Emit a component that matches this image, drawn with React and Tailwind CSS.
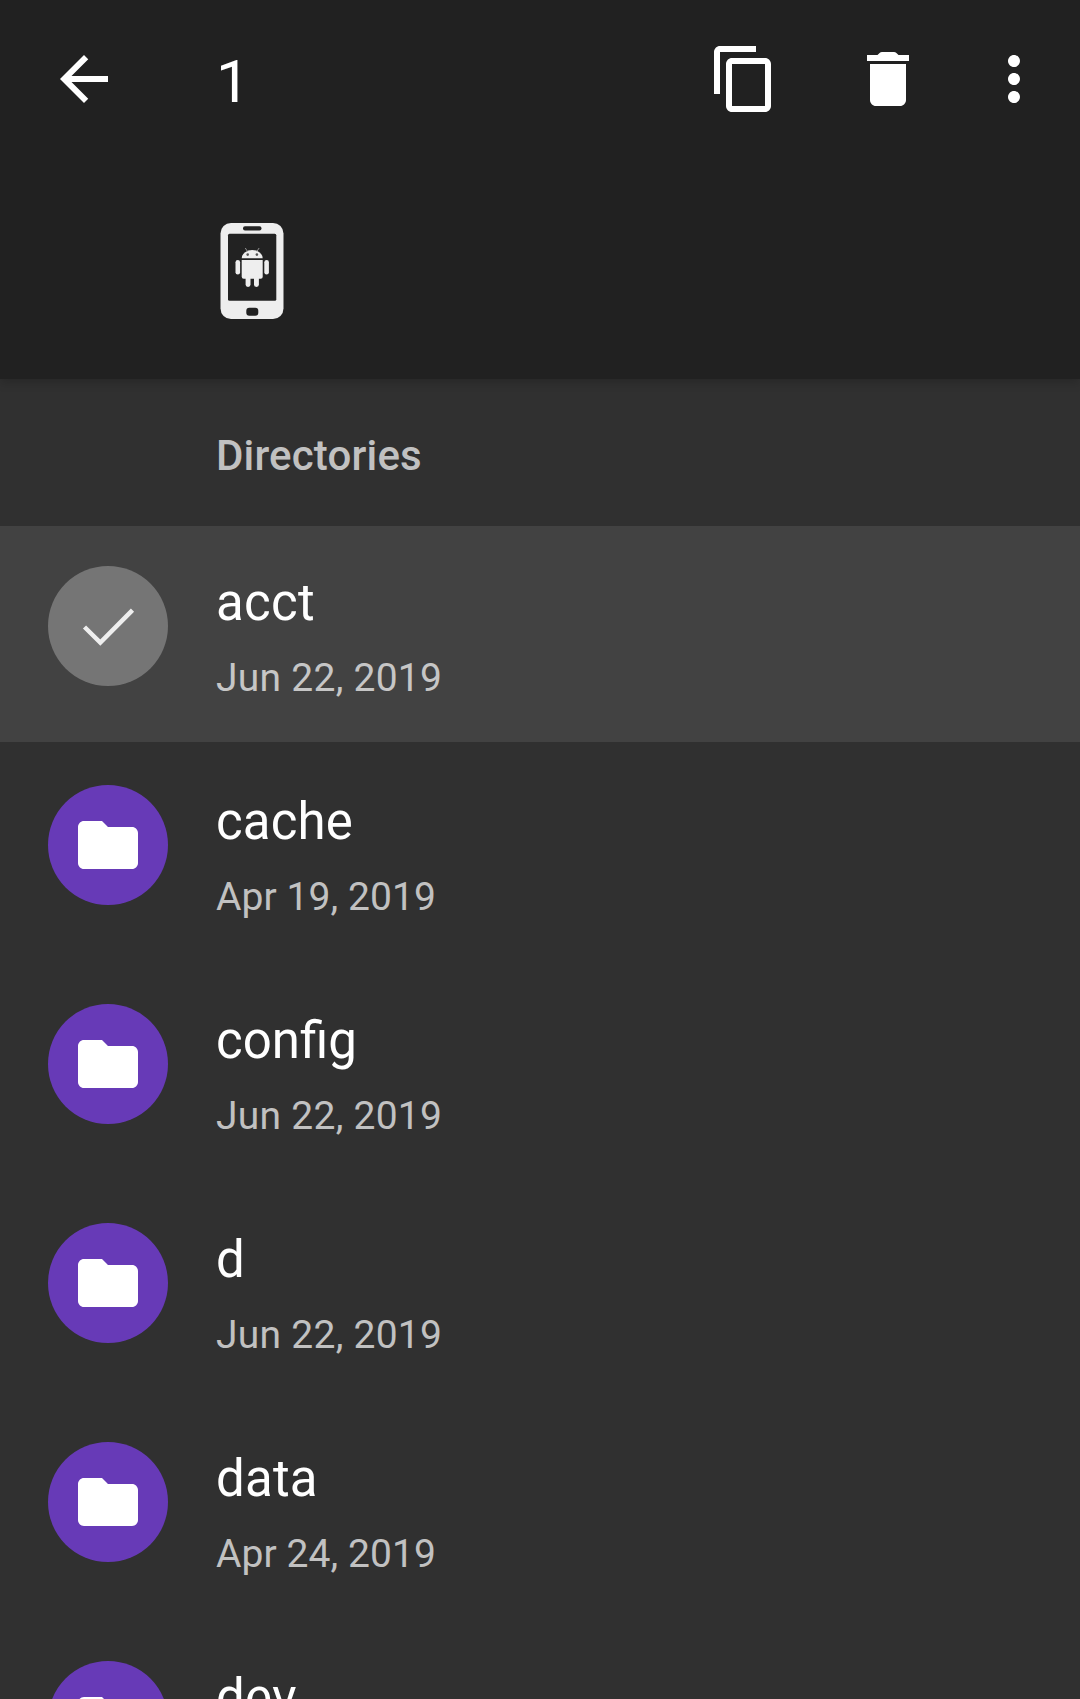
const directories = [
  { name: 'acct', date: 'Jun 22, 2019', nameTracking: 'tracking-[0.3px]', dateTracking: 'tracking-[0.26px]', selected: true },
  { name: 'cache', date: 'Apr 19, 2019', nameTracking: 'tracking-[0.15px]', dateTracking: 'tracking-[0.08px]' },
  { name: 'config', date: 'Jun 22, 2019', nameTracking: '', dateTracking: 'tracking-[0.26px]' },
  { name: 'd', date: 'Jun 22, 2019', nameTracking: '', dateTracking: 'tracking-[0.26px]' },
  { name: 'data', date: 'Apr 24, 2019', nameTracking: 'tracking-[0.2px]', dateTracking: 'tracking-[0.08px]' },
  { name: 'dev', nameTracking: 'tracking-[0.2px]' },
];

function Icon({ d }) {
  return (
    <svg viewBox="0 0 24 24" className="size-[72px]" fill="currentColor">
      <path d={d} />
    </svg>
  );
}

const BACK = 'M20 11H7.83l5.59-5.59L12 4l-8 8 8 8 1.41-1.41L7.83 13H20v-2z';
const COPY =
  'M16 1H4c-1.1 0-2 .9-2 2v14h2V3h12V1zm3 4H8c-1.1 0-2 .9-2 2v14c0 1.1.9 2 2 2h11c1.1 0 2-.9 2-2V7c0-1.1-.9-2-2-2zm0 16H8V7h11v14z';
const TRASH =
  'M6 19c0 1.1.9 2 2 2h8c1.1 0 2-.9 2-2V7H6v12zM19 4h-3.500l-.7-.7c-.2-.2-.5-.3-.8-.3h-4c-.3 0-.6.1-.8.3L8.500 4H5v2h14V4z';
const MORE =
  'M12 8c1.1 0 2-.9 2-2s-.9-2-2-2-2 .9-2 2 .9 2 2 2zm0 2c-1.1 0-2 .9-2 2s.9 2 2 2 2-.9 2-2-.9-2-2-2zm0 6c-1.1 0-2 .9-2 2s.9 2 2 2 2-.9 2-2-.9-2-2-2z';
const FOLDER =
  'M10 4H4c-1.100 0-2 .9-2 2v12c0 1.100.9 2 2 2h16c1.100 0 2-.9 2-2V8c0-1.100-.9-2-2-2h-8l-2-2z';

function PhoneIcon() {
  return (
    <svg viewBox="0 0 64 96" className="h-24 w-16">
      <rect x="0.5" width="63" height="96" rx="10.500" fill="#eeeeee" />
      <g fill="#222222">
        <rect x="23" y="3.300" width="18.500" height="4.300" rx="2" />
        <rect x="8" y="10.700" width="48.300" height="67" rx="1.500" />
        <rect x="26.300" y="84.700" width="12" height="8" rx="3" />
      </g>
      <g fill="#eeeeee">
        <path d="M21.700 35.300a10.500 8.300 0 0 1 21 0z" />
        <path d="M21.700 37h21v16.800a2 2 0 0 1-2 2H23.700a2 2 0 0 1-2-2z" />
        <rect x="15.500" y="37" width="4.600" height="14.500" rx="2.300" />
        <rect x="44.300" y="37" width="4.600" height="14.500" rx="2.300" />
        <rect x="25.600" y="52" width="4.900" height="12" rx="2.400" />
        <rect x="34" y="52" width="4.900" height="12" rx="2.400" />
      </g>
      <path d="M27.500 28.500l-2.200-3.500M36.900 28.500l2.200-3.500" stroke="#9e9e9e" strokeWidth="0.9" />
      <circle cx="27.700" cy="31.600" r="1.300" fill="#555555" />
      <circle cx="36.900" cy="31.600" r="1.300" fill="#555555" />
    </svg>
  );
}

function Row({ name, date, selected, nameTracking, dateTracking }) {
  return (
    <li className={`flex h-[216px] shrink-0 pl-12 pt-10 ${selected ? 'bg-[#424242]' : ''}`}>
      <div
        className={`flex size-[120px] shrink-0 items-center justify-center rounded-full text-white ${
          selected ? 'bg-[#757575]' : 'bg-[#673ab7]'
        }`}
      >
        {selected ? (
          <svg viewBox="0 0 120 120" className="size-[120px]" fill="none">
            <path d="M36.500 61L52.300 76.500L84.500 44.200" stroke="#eeeeee" strokeWidth="4.500" />
          </svg>
        ) : (
          <Icon d={FOLDER} />
        )}
      </div>
      <div className="ml-12 pt-[7px]">
        <div className={`text-[51px] leading-[60px] text-white ${nameTracking}`}>{name}</div>
        {date && (
          <div
            className={`mt-[22px] text-[39px] leading-[46px] ${dateTracking} ${
              selected ? 'text-[#c6c6c6]' : 'text-[#c1c1c1]'
            }`}
          >
            {date}
          </div>
        )}
      </div>
    </li>
  );
}

export default function App() {
  return (
    <div className="flex h-[1699px] w-[1080px] flex-col overflow-hidden bg-[#303030] font-['Roboto',sans-serif]">
      <header className="relative h-[379px] shrink-0 bg-[#212121] shadow-[0_3px_10px_rgba(0,0,0,0.2)]">
        <div className="flex h-[158px] items-center pl-12 pr-[30px] text-white">
          <button className="block"><Icon d={BACK} /></button>
          <span className="ml-24 mt-1.5 text-[60px] leading-[70px]">1</span>
          <div className="ml-auto flex">
            <button className="block"><Icon d={COPY} /></button>
            <button className="ml-[72px] block"><Icon d={TRASH} /></button>
            <button className="ml-[54px] block"><Icon d={MORE} /></button>
          </div>
        </div>
        <div className="ml-[220px] mt-[65px]">
          <PhoneIcon />
        </div>
      </header>
      <h2 className="flex h-[147px] shrink-0 items-center pl-[216px] pt-[7px] text-[42px] font-medium leading-[50px] tracking-[0.17px] text-[#c1c1c1]">
        Directories
      </h2>
      <ul className="flex flex-col gap-[3px]">
        {directories.map((item) => (
          <Row key={item.name} {...item} />
        ))}
      </ul>
    </div>
  );
}
